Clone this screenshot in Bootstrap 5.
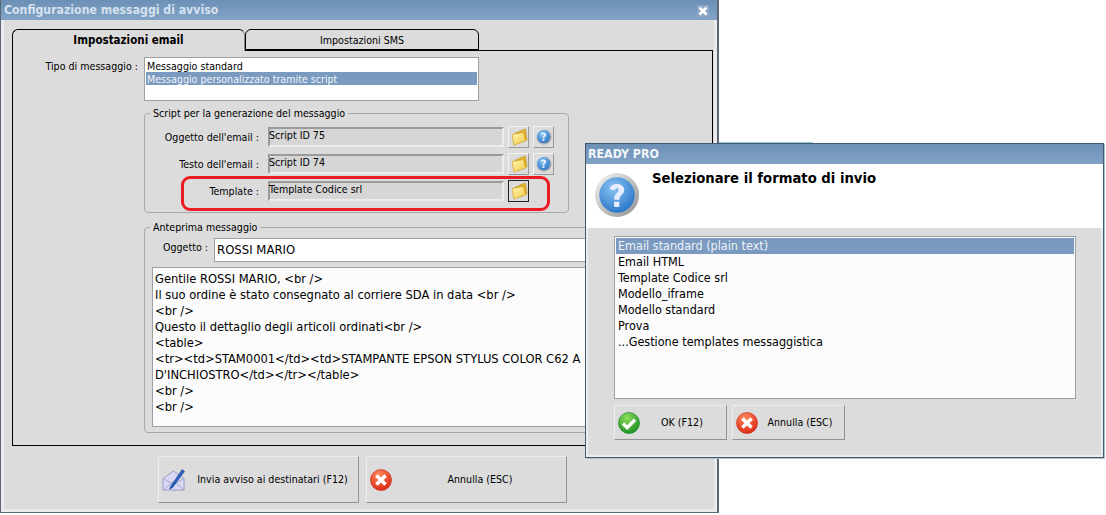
<!doctype html>
<html lang="it">

<head>
  <meta charset="utf-8" />
  <meta name="viewport" content="width=device-width, initial-scale=1" />
  <title>Configurazione messaggi di avviso</title>
  <link href="https://cdn.jsdelivr.net/npm/bootstrap@5.3.5/dist/css/bootstrap.min.css" rel="stylesheet" />
  <style>
    body {
      background: #fff;
      font-family: "DejaVu Sans Condensed", Roboto, "Liberation Sans", sans-serif;
      font-size: 10.6px;
      line-height: 16px;
      color: #000;
      overflow: hidden;
    }

    .desk {
      width: 1106px;
      height: 515px;
      position: relative;
      overflow: hidden;
    }

    .win {
      position: absolute;
      background: #dcdcdc;
    }

    .win-main {
      left: -1px;
      top: -1px;
      width: 720px;
      height: 514px;
      box-shadow: inset 0 0 0 3px #e9e9ee;
      border: solid #5c6874;
      border-width: 1px 2px 1px 2px;
    }

    .win-ask {
      left: 585px;
      top: 143px;
      width: 519px;
      height: 315px;
      border: 1px solid #44586f;
      box-shadow: 1px 1px 0 #aebfd0;
    }

    .bar {
      height: 20px;
      background: linear-gradient(#6c90b6, #82a3c6);
      color: #d6e2ee;
      font-size: 12.2px;
      font-weight: 700;
      line-height: 20px;
      padding-left: 3px;
      position: relative;
    }

    .bar-x {
      width: 12px;
      height: 12px;
      right: 8px;
      top: 5px;
      position: absolute;
    }

    .main-body {
      padding: 9px 6px 0 11px;
    }

    .tabs {
      height: 21px;
      border: 0;
      flex-wrap: nowrap;
    }

    .tabs .nav-link {
      border: 1px solid #000;
      border-bottom: 0;
      border-radius: 6px 6px 0 0;
      background: #dcdcdc;
      color: #000;
      height: 21px;
      margin: 0;
      padding: 2px 0 0;
      font-size: 10.6px;
      line-height: 16px;
      text-align: center;
    }

    .tabs .tab-on {
      width: 233px;
      font-weight: 700;
      font-size: 11.5px;
      height: 22px;
      position: relative;
      z-index: 2;
      border-right-color: #888;
    }

    .tabs .tab-off {
      width: 234px;
      border-bottom: 1px solid #000;
    }

    .panel {
      width: 701px;
      height: 396px;
      border: 1px solid #000;
      padding: 6px 0 0 0;
    }

    .lbl {
      text-align: right;
    }

    .type-row {
      height: 44px;
    }

    .type-lbl {
      width: 125px;
      margin-right: 6px;
      padding-top: 1px;
    }

    .type-list {
      width: 335px;
      height: 44px;
      background: #fff;
      border: 1px solid #a0a0a0;
      padding: 1px;
    }

    .opt {
      height: 13px;
      line-height: 14px;
      padding-left: 1px;
      white-space: nowrap;
    }

    .opt-on {
      background: #7a9abf;
      color: #f2f5f9;
    }

    .group {
      border: 1px solid #a8a8a8;
      border-radius: 4px;
      margin: 0 0 0 131px;
      padding: 0;
      position: relative;
    }

    .group legend {
      float: none;
      width: auto;
      font-size: 10.6px;
      line-height: 14px;
      margin: 0 0 6px 5px;
      padding: 0 3px;
    }

    .group-script {
      width: 425px;
      height: 107px;
      margin-top: 5px;
    }

    .group-view {
      width: 560px;
      height: 213px;
      margin-top: 7px;
    }

    .group-view legend {
      margin-bottom: 4px;
    }

    .script-row {
      height: 21px;
      margin-bottom: 6px;
      align-items: center;
    }

    .script-lbl {
      width: 114px;
      margin-right: 9px;
    }

    .ro-field {
      width: 236px;
      height: 20px;
      background: #d6d6d6;
      border: 2px solid;
      border-color: #9a9a9a #ececec #ececec #9a9a9a;
      text-indent: -1px;
      line-height: 12px;
    }

    .sq-btn {
      width: 21px;
      height: 22px;
      padding: 0;
      background: #dcdcdc;
      border: 1px solid;
      border-color: #f2f2f2 #999 #999 #f2f2f2;
      border-radius: 0;
      line-height: 0;
    }

    .sq-focus {
      border-color: #222;
    }

    .view-lbl {
      width: 63px;
      margin-right: 6px;
      padding-bottom: 6px;
    }

    .view-input {
      width: 400px;
      height: 24px;
      background: #fff;
      border: 1px solid #a0a0a0;
      font-size: 13px;
      line-height: 22px;
      padding-left: 2px;
    }

    .view-text {
      width: 500px;
      height: 160px;
      margin: 5px 0 0 7px;
      background: #fbfbfb;
      border: 1px solid #a0a0a0;
      font-size: 12.8px;
      line-height: 16px;
      padding: 3px 2px;
      white-space: nowrap;
      overflow: hidden;
    }

    .foot-btn {
      height: 47px;
      width: 201px;
      padding: 0 0 0 3px;
      border: 1px solid;
      border-color: #ececec #929292 #929292 #ececec;
      border-radius: 0;
      background: #dcdcdc;
      font-size: 10.6px;
      color: #000;
      gap: 2px;
      white-space: nowrap;
    }

    .foot-row {
      margin: 10px 0 0 146px;
      gap: 7px;
    }

    .foot-name {
      flex: 1;
      text-align: center;
    }

    .ring {
      position: absolute;
      left: 181px;
      top: 176px;
      width: 369px;
      height: 35px;
      border: 3px solid #ed1c24;
      border-radius: 9px;
      pointer-events: none;
    }

    .ask-bar {
      height: 20px;
      color: #f2f6fa;
      font-size: 12.3px;
      font-weight: 700;
      padding-left: 2px;
    }

    .ask-head {
      height: 64px;
      background: #fff;
      padding: 8px 0 0 8px;
    }

    .ask-title {
      font-size: 14.7px;
      font-weight: 700;
      margin: -2px 0 0 12px;
    }

    .ask-body {
      height: 229px;
      padding: 8px 0 0 26px;
      border: solid #ececec;
      border-width: 0 2px 2px 2px;
    }

    .ask-list {
      width: 462px;
      height: 163px;
      background: #fbfbfb;
      border: 1px solid #a0a0a0;
      border-radius: 0;
      padding: 1px;
    }

    .ask-list .list-group-item {
      background: transparent;
      border: 0;
      border-radius: 0;
      padding: 0 0 0 2px;
      height: 16px;
      line-height: 16px;
      font-size: 12.5px;
      color: #000;
    }

    .ask-list .list-group-item.active {
      background: #7a9abf;
      color: #eef2f7;
    }

    .ask-btns {
      margin-top: 6px;
      gap: 5px;
    }

    .ask-btn {
      width: 113px;
      height: 35px;
      padding: 0 2px 0 3px;
      gap: 0;
    }

    .stray {
      position: absolute;
      left: 719px;
      top: 142px;
      width: 94px;
      height: 1px;
      background: #8fd0d8;
    }
  </style>
</head>

<body>
  <svg width="0" height="0" class="position-absolute">
    <defs>
      <linearGradient id="gFold" x1="0" y1="0" x2="1" y2="1">
        <stop offset="0" stop-color="#fff6b4" />
        <stop offset="1" stop-color="#f2cb4a" />
      </linearGradient>
      <radialGradient id="gBlue" cx="0.4" cy="0.3" r="0.8">
        <stop offset="0" stop-color="#8ac4f2" />
        <stop offset="1" stop-color="#1f6fc4" />
      </radialGradient>
      <linearGradient id="gRim" x1="0" y1="0" x2="1" y2="1">
        <stop offset="0" stop-color="#f4f4f4" />
        <stop offset="1" stop-color="#909090" />
      </linearGradient>
      <radialGradient id="gGreen" cx="0.4" cy="0.25" r="0.85">
        <stop offset="0" stop-color="#8ede5a" />
        <stop offset="1" stop-color="#0f8a1e" />
      </radialGradient>
      <radialGradient id="gRed" cx="0.4" cy="0.25" r="0.85">
        <stop offset="0" stop-color="#ff8a5c" />
        <stop offset="1" stop-color="#d81f0e" />
      </radialGradient>
      <symbol id="icoFolder" viewBox="0 0 20 20">
        <path d="M6 6 L9.5 5 L10.5 4 L16.5 2 L18 13 L7 15 Z" fill="#e2b02c" stroke="#b98a1a" stroke-width="0.5" />
        <path d="M3 7.5 L14.5 5.5 L16.5 14 L5 18 Z" fill="url(#gFold)" stroke="#d7a62a" stroke-width="0.8" />
      </symbol>
      <symbol id="icoHelp" viewBox="0 0 48 48">
        <circle cx="24" cy="24" r="23" fill="url(#gRim)" />
        <circle cx="24" cy="24" r="18.5" fill="url(#gBlue)" />
        <path d="M16.5 18 C17 11 31 10.5 31.5 18.5 C31.8 23.5 26.5 23.5 26.5 29 L21 29 C20.5 22.5 25.5 22 25.5 18.8 C25.5 15.8 22 16 21.8 19 Z" fill="#e8ecff" />
        <rect x="21" y="31" width="5.5" height="5.5" fill="#e8ecff" />
      </symbol>
      <symbol id="icoOk" viewBox="0 0 24 24">
        <circle cx="12" cy="12" r="11.5" fill="url(#gGreen)" stroke="#0c7a1a" stroke-width="0.6" />
        <path d="M5.5 12.5 L10 17 L18.5 8.5" fill="none" stroke="#fff" stroke-width="3.6" />
      </symbol>
      <symbol id="icoNo" viewBox="0 0 24 24">
        <circle cx="12" cy="12" r="11.5" fill="url(#gRed)" stroke="#c4200e" stroke-width="0.6" />
        <path d="M7 7 L17 17 M17 7 L7 17" fill="none" stroke="#fff" stroke-width="3.8" />
      </symbol>
      <symbol id="icoMail" viewBox="0 0 24 24">
        <path d="M1 11 L12 3 L23 11 L23 23 L1 23 Z" fill="#d8d8f4" stroke="#8a8ab8" stroke-width="0.8" />
        <path d="M1 23 L12 14 L23 23 M1 11 L12 17 L23 11" fill="none" stroke="#9a9ac8" stroke-width="0.8" />
        <path d="M9 19 L21 1.5 L23.5 3.5 L11 20.5 L8 22 Z" fill="#2a5fc0" stroke="#15357a" stroke-width="0.5" />
      </symbol>
    </defs>
  </svg>

  <div class="desk">
    <div class="stray"></div>

    <div class="win win-main">
      <div class="bar">Configurazione messaggi di avviso
        <svg class="bar-x" viewBox="0 0 12 12">
          <rect width="12" height="12" fill="#8ea9c8" />
          <path d="M2.5 2.5 L9.5 9.5 M9.5 2.5 L2.5 9.5" stroke="#fff" stroke-width="2.6" />
        </svg>
      </div>
      <div class="main-body">
        <ul class="nav nav-tabs tabs">
          <li class="nav-item"><a class="nav-link tab-on" href="#">Impostazioni email</a></li>
          <li class="nav-item"><a class="nav-link tab-off" href="#">Impostazioni SMS</a></li>
        </ul>
        <div class="panel">
          <div class="d-flex type-row">
            <div class="lbl type-lbl">Tipo di messaggio :</div>
            <div class="type-list">
              <div class="opt">Messaggio standard</div>
              <div class="opt opt-on">Messaggio personalizzato tramite script</div>
            </div>
          </div>

          <fieldset class="group group-script">
            <legend>Script per la generazione del messaggio</legend>
            <div class="d-flex script-row">
              <div class="lbl script-lbl">Oggetto dell'email :</div>
              <div class="ro-field">Script ID 75</div>
              <button class="btn sq-btn ms-1"><svg width="20" height="20"><use href="#icoFolder" /></svg></button>
              <button class="btn sq-btn ms-1"><svg width="17" height="17"><use href="#icoHelp" /></svg></button>
            </div>
            <div class="d-flex script-row">
              <div class="lbl script-lbl">Testo dell'email :</div>
              <div class="ro-field">Script ID 74</div>
              <button class="btn sq-btn ms-1"><svg width="20" height="20"><use href="#icoFolder" /></svg></button>
              <button class="btn sq-btn ms-1"><svg width="17" height="17"><use href="#icoHelp" /></svg></button>
            </div>
            <div class="d-flex script-row">
              <div class="lbl script-lbl">Template :</div>
              <div class="ro-field">Template Codice srl</div>
              <button class="btn sq-btn sq-focus ms-1"><svg width="20" height="20"><use href="#icoFolder" /></svg></button>
            </div>
          </fieldset>

          <fieldset class="group group-view">
            <legend>Anteprima messaggio</legend>
            <div class="d-flex align-items-center">
              <div class="lbl view-lbl">Oggetto :</div>
              <div class="view-input">ROSSI MARIO</div>
            </div>
            <div class="view-text">Gentile ROSSI MARIO, &lt;br /&gt;<br>Il suo ordine è stato consegnato al corriere SDA in data &lt;br /&gt;<br>&lt;br /&gt;<br>Questo il dettaglio degli articoli ordinati&lt;br /&gt;<br>&lt;table&gt;<br>&lt;tr&gt;&lt;td&gt;STAM0001&lt;/td&gt;&lt;td&gt;STAMPANTE EPSON STYLUS COLOR C62 A<br>D'INCHIOSTRO&lt;/td&gt;&lt;/tr&gt;&lt;/table&gt;<br>&lt;br /&gt;<br>&lt;br /&gt;</div>
          </fieldset>
        </div>

        <div class="d-flex foot-row">
          <button class="btn foot-btn d-flex align-items-center"><svg width="23" height="23"><use href="#icoMail" /></svg><span class="foot-name">Invia avviso ai destinatari (F12)</span></button>
          <button class="btn foot-btn d-flex align-items-center"><svg width="22" height="22"><use href="#icoNo" /></svg><span class="foot-name">Annulla (ESC)</span></button>
        </div>
      </div>
    </div>

    <div class="ring"></div>

    <div class="win win-ask">
      <div class="bar ask-bar">READY PRO</div>
      <div class="ask-head d-flex">
        <svg width="46" height="46"><use href="#icoHelp" /></svg>
        <div class="ask-title">Selezionare il formato di invio</div>
      </div>
      <div class="ask-body">
        <div class="ask-list list-group">
          <div class="list-group-item active">Email standard (plain text)</div>
          <div class="list-group-item">Email HTML</div>
          <div class="list-group-item">Template Codice srl</div>
          <div class="list-group-item">Modello_iframe</div>
          <div class="list-group-item">Modello standard</div>
          <div class="list-group-item">Prova</div>
          <div class="list-group-item">...Gestione templates messaggistica</div>
        </div>
        <div class="d-flex ask-btns">
          <button class="btn foot-btn ask-btn d-flex align-items-center"><svg width="22" height="22"><use href="#icoOk" /></svg><span class="foot-name">OK (F12)</span></button>
          <button class="btn foot-btn ask-btn d-flex align-items-center"><svg width="22" height="22"><use href="#icoNo" /></svg><span class="foot-name">Annulla (ESC)</span></button>
        </div>
      </div>
    </div>
  </div>

  <script src="https://cdn.jsdelivr.net/npm/bootstrap@5.3.5/dist/js/bootstrap.bundle.min.js"></script>
</body>

</html>
